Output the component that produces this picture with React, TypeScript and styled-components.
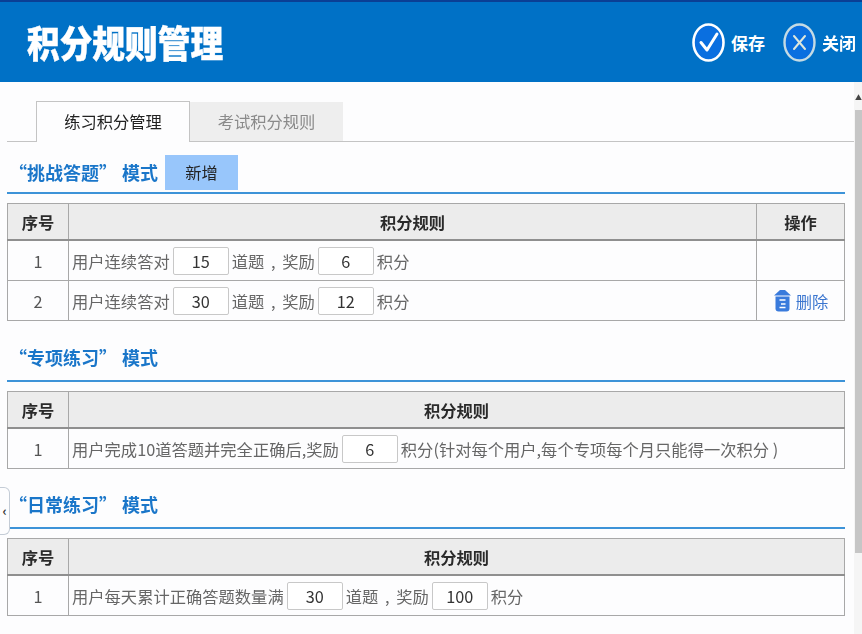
import styled, { createGlobalStyle } from 'styled-components';

const GlobalStyle = createGlobalStyle`
  html, body {
    margin: 0;
    height: 100%;
    overflow: hidden;
    background: #fdfdfe;
  }
  body {
    font-family: "Noto Sans CJK SC", "Liberation Sans", sans-serif;
  }
`;

const Page = styled.div`
  display: flex;
  flex-direction: column;
  position: relative;
  width: 862px;
  height: 634px;
  filter: blur(0.4px);
`;

const Header = styled.header`
  display: flex;
  align-items: center;
  justify-content: space-between;
  box-sizing: border-box;
  height: 82px;
  padding: 0 6px 0 27px;
  background: #0071c6;
  border-top: 2px solid #0a3f95;
`;

const HeaderTitle = styled.h1`
  margin: 0;
  color: #fff;
  font-size: 32.7px;
  line-height: 80px;
  font-weight: 900;
  transform: scaleY(1.13);
  -webkit-text-stroke: 0.4px #fff;
`;

const HeaderActions = styled.div`
  display: flex;
  align-items: center;
  gap: 18px;
`;

const HeaderAction = styled.div`
  display: flex;
  align-items: center;
  gap: 6px;
  color: #fff;
  font-size: 17px;
  font-weight: 700;
`;

const Body = styled.div`
  display: flex;
  flex: 1;
  min-height: 0;
`;

const Content = styled.main`
  flex: 1;
  min-width: 0;
  padding: 18px 0 0 7px;
`;

const Scrollbar = styled.div`
  display: flex;
  flex-direction: column;
  align-items: flex-end;
  width: 8px;
  background: #f5f5f5;
`;

const ScrollArrow = styled.div`
  width: 7px;
  height: 28px;
  color: #444;
  font-size: 7px;
  line-height: 30px;
  text-align: center;
`;

const ScrollThumb = styled.div`
  width: 7px;
  height: 443px;
  background: #c6c6c6;
`;

const Tabs = styled.div`
  display: flex;
  align-items: flex-end;
  height: 41px;
  padding-left: 29px;
  border-bottom: 1px solid #c4c4c4;
`;

const Tab = styled.div<{ $active?: boolean }>`
  box-sizing: border-box;
  width: ${(p) => (p.$active ? '154px' : '153px')};
  height: ${(p) => (p.$active ? '41px' : '39px')};
  margin-bottom: ${(p) => (p.$active ? '-1px' : '0')};
  background: ${(p) => (p.$active ? '#fdfdfe' : '#eeeeee')};
  border: ${(p) => (p.$active ? '1px solid #c4c4c4' : '0')};
  border-bottom: 0;
  color: ${(p) => (p.$active ? '#222' : '#8a8a8a')};
  font-size: 16.3px;
  line-height: 39px;
  text-align: center;
`;

const Section = styled.section`
  width: 838px;
`;

const SectionHead = styled.div<{ $top: number }>`
  display: flex;
  align-items: flex-end;
  gap: 7px;
  box-sizing: border-box;
  height: ${(p) => p.$top}px;
  padding-left: 2px;
  border-bottom: 2px solid #3d93d8;
  margin-bottom: 9px;
`;

const SectionTitle = styled.h2<{ $lift: number }>`
  margin: 0 0 ${(p) => p.$lift}px;
  color: #1a76c9;
  font-size: 18px;
  line-height: 26px;
  font-weight: 700;
`;

const TitleMode = styled.span`
  margin-left: 5px;
`;

const AddButton = styled.div`
  width: 73px;
  height: 35px;
  margin-bottom: 2px;
  background: #98c6fb;
  color: #222;
  font-size: 16.3px;
  line-height: 35px;
  text-align: center;
`;

const RuleTable = styled.table`
  width: 100%;
  border-collapse: collapse;
  table-layout: fixed;
  border: 1px solid #a8a8a8;
`;

const HeadCell = styled.th<{ $width?: number }>`
  width: ${(p) => (p.$width ? `${p.$width}px` : 'auto')};
  height: 35px;
  padding: 0;
  background: #ececec;
  border: 1px solid #a8a8a8;
  border-bottom: 2px solid #8f8f8f;
  color: #2a2a2a;
  font-size: 16.3px;
  font-weight: 700;
  text-align: center;
`;

const IndexCell = styled.td`
  height: 39px;
  padding: 0;
  border: 1px solid #a8a8a8;
  color: #555;
  font-size: 16.3px;
  text-align: center;
`;

const RuleCell = styled.td`
  height: 39px;
  padding: 0 0 0 3px;
  border: 1px solid #a8a8a8;
  color: #666;
  font-size: 16.3px;
  white-space: nowrap;
`;

const ActionCell = styled.td`
  height: 39px;
  padding: 0;
  border: 1px solid #a8a8a8;
`;

const RuleLine = styled.div`
  display: flex;
  align-items: center;
  gap: 3px;
`;

const ValueBox = styled.span`
  box-sizing: border-box;
  width: 56px;
  height: 28px;
  border: 1px solid #c8c8c8;
  border-radius: 2px;
  background: #fff;
  color: #333;
  font-size: 16.3px;
  line-height: 26px;
  text-align: center;
`;

const Comma = styled.span`
  display: inline-block;
  width: 18px;
  text-align: center;
`;

const DeleteLink = styled.div`
  display: flex;
  align-items: center;
  justify-content: center;
  gap: 4px;
  color: #3a75cf;
  font-size: 16.3px;
`;

const SideHandle = styled.div`
  position: absolute;
  left: 0;
  top: 487px;
  box-sizing: border-box;
  width: 10px;
  height: 48px;
  background: #fdfdfe;
  border: 1px solid #c4ccd6;
  border-left: 0;
  border-radius: 0 6px 6px 0;
  color: #333;
  font-size: 13px;
  font-weight: 700;
  line-height: 46px;
  text-align: center;
`;

const SaveIcon = () => (
  <svg width="33" height="39" viewBox="0 0 33 39" fill="none">
    <ellipse cx="16.5" cy="19.5" rx="15" ry="18" stroke="#fff" strokeWidth="2.6" fill="#0a6fe0" />
    <path d="M9 19.5l6 7.5L25 11" stroke="#fff" strokeWidth="3" strokeLinecap="round" strokeLinejoin="round" />
  </svg>
);

const CloseIcon = () => (
  <svg width="33" height="39" viewBox="0 0 33 39" fill="none">
    <ellipse cx="16.5" cy="19.5" rx="15" ry="18" stroke="#c5dbe4" strokeWidth="2.4" fill="#0a6fe0" />
    <path d="M11 13l11 13M22 13L11 26" stroke="#dfe6dc" strokeWidth="2" strokeLinecap="round" />
  </svg>
);

const TrashIcon = () => (
  <svg width="19" height="23" viewBox="0 0 19 23">
    <path d="M7 1h5l6 5.500H1z" fill="#3a7bdc" />
    <path d="M2.500 7.500h14v12c0 1.800-1 3-3 3h-8c-2 0-3-1.200-3-3z" fill="#3a7bdc" />
    <path d="M6.500 11h6M8 15h4.500M6.500 18.500h6" stroke="#fff" strokeWidth="1.400" />
  </svg>
);

const ScoreRule = ({ count, score }: { count: string; score: string }) => (
  <RuleLine>
    用户连续答对<ValueBox>{count}</ValueBox>
    <span>
      道题<Comma>,</Comma>奖励
    </span>
    <ValueBox>{score}</ValueBox>积分
  </RuleLine>
);

export default function App() {
  return (
    <Page>
      <GlobalStyle />
      <Header>
        <HeaderTitle>积分规则管理</HeaderTitle>
        <HeaderActions>
          <HeaderAction>
            <SaveIcon />
            保存
          </HeaderAction>
          <HeaderAction>
            <CloseIcon />
            关闭
          </HeaderAction>
        </HeaderActions>
      </Header>
      <Body>
        <Content>
          <Tabs>
            <Tab $active>练习积分管理</Tab>
            <Tab>考试积分规则</Tab>
          </Tabs>
          <Section>
            <SectionHead $top={52}>
              <SectionTitle $lift={7}>
                “挑战答题”<TitleMode>模式</TitleMode>
              </SectionTitle>
              <AddButton>新增</AddButton>
            </SectionHead>
            <RuleTable>
              <thead>
                <tr>
                  <HeadCell $width={60}>序号</HeadCell>
                  <HeadCell>积分规则</HeadCell>
                  <HeadCell $width={87}>操作</HeadCell>
                </tr>
              </thead>
              <tbody>
                <tr>
                  <IndexCell>1</IndexCell>
                  <RuleCell>
                    <ScoreRule count="15" score="6" />
                  </RuleCell>
                  <ActionCell />
                </tr>
                <tr>
                  <IndexCell>2</IndexCell>
                  <RuleCell>
                    <ScoreRule count="30" score="12" />
                  </RuleCell>
                  <ActionCell>
                    <DeleteLink>
                      <TrashIcon />
                      删除
                    </DeleteLink>
                  </ActionCell>
                </tr>
              </tbody>
            </RuleTable>
          </Section>
          <Section>
            <SectionHead $top={61}>
              <SectionTitle $lift={10}>
                “专项练习”<TitleMode>模式</TitleMode>
              </SectionTitle>
            </SectionHead>
            <RuleTable>
              <thead>
                <tr>
                  <HeadCell $width={60}>序号</HeadCell>
                  <HeadCell>积分规则</HeadCell>
                </tr>
              </thead>
              <tbody>
                <tr>
                  <IndexCell>1</IndexCell>
                  <RuleCell>
                    <RuleLine>
                      用户完成10道答题并完全正确后,奖励<ValueBox>6</ValueBox>积分(针对每个用户,每个专项每个月只能得一次积分 )
                    </RuleLine>
                  </RuleCell>
                </tr>
              </tbody>
            </RuleTable>
          </Section>
          <Section>
            <SectionHead $top={60}>
              <SectionTitle $lift={10}>
                “日常练习”<TitleMode>模式</TitleMode>
              </SectionTitle>
            </SectionHead>
            <RuleTable>
              <thead>
                <tr>
                  <HeadCell $width={60}>序号</HeadCell>
                  <HeadCell>积分规则</HeadCell>
                </tr>
              </thead>
              <tbody>
                <tr>
                  <IndexCell>1</IndexCell>
                  <RuleCell>
                    <RuleLine>
                      用户每天累计正确答题数量满<ValueBox>30</ValueBox>
                      <span>
                        道题<Comma>,</Comma>奖励
                      </span>
                      <ValueBox>100</ValueBox>积分
                    </RuleLine>
                  </RuleCell>
                </tr>
              </tbody>
            </RuleTable>
          </Section>
        </Content>
        <Scrollbar>
          <ScrollArrow>▲</ScrollArrow>
          <ScrollThumb />
        </Scrollbar>
      </Body>
      <SideHandle>‹</SideHandle>
    </Page>
  );
}
